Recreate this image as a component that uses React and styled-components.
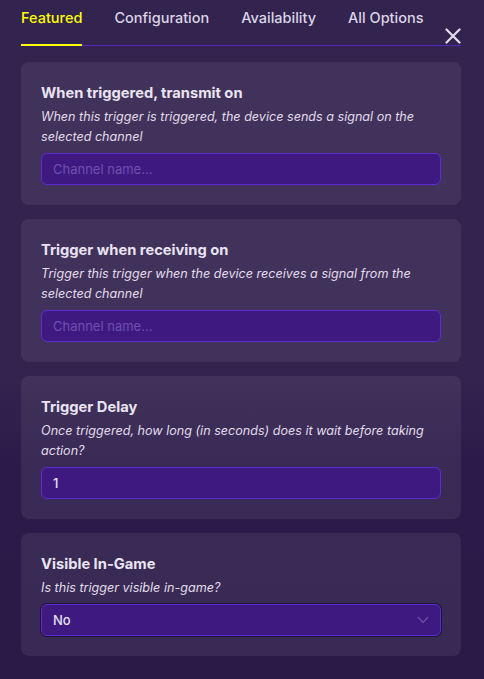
import React from "react";
import styled, { createGlobalStyle } from "styled-components";

const Global = createGlobalStyle`
	html, body {
		margin: 0;
		padding: 0;
	}
	body {
		background: linear-gradient(180deg, #33234f 0px, #33234f 380px, #2b1b4a 460px, #291a48 679px);
		min-height: 679px;
		font-family: Inter, "Noto Sans", sans-serif;
		color: #e9e4f1;
	}
`;

const Page = styled.div`
	width: 484px;
	height: 679px;
	padding: 0 23px 0 21px;
	box-sizing: border-box;
`;

const TabBar = styled.div`
	position: relative;
	display: flex;
	align-items: flex-end;
	height: 45px;
	border-bottom: 1px solid #5527c0;
`;

const Tab = styled.div`
	height: 44px;
	box-sizing: border-box;
	padding-top: 7px;
	margin-right: 32px;
	font-size: 14.5px;
	font-weight: 500;
	color: ${(p) => (p.$active ? "#ffff00" : "#dcd5e6")};
	border-bottom: ${(p) => (p.$active ? "2px solid #ffff00" : "2px solid transparent")};
	margin-bottom: -1px;
	&:last-of-type {
		margin-right: 0;
	}
`;

const Close = styled.button`
	position: absolute;
	right: 0;
	top: 28px;
	width: 16px;
	height: 16px;
	padding: 0;
	border: 0;
	background: none;
	display: flex;
`;

const List = styled.div`
	display: flex;
	flex-direction: column;
	gap: 14px;
	padding-top: 16px;
`;

const Card = styled.div`
	background: rgba(255, 255, 255, 0.07);
	border-radius: 8px;
	padding: 21px 20px 20px 20px;
`;

const Title = styled.div`
	font-size: 14.7px;
	font-weight: 700;
	line-height: 20px;
	color: #e9e4f1;
	margin-bottom: 4px;
`;

const Desc = styled.div`
	font-size: 12.6px;
	font-style: italic;
	line-height: 20px;
	color: #e2dcea;
	margin-bottom: 6px;
`;

const Input = styled.input`
	display: block;
	width: 100%;
	box-sizing: border-box;
	height: 32px;
	border-radius: 6px;
	border: 1px solid #5d2bd3;
	background: #3e1a80;
	color: #e6e0f0;
	font-family: Inter, "Noto Sans", sans-serif;
	font-size: 13px;
	font-weight: 500;
	padding: 0 11px;
	outline: none;
	&::placeholder {
		color: #6f4fae;
		font-weight: 400;
	}
`;

const Select = styled.div`
	display: flex;
	align-items: center;
	justify-content: space-between;
	height: 32px;
	box-sizing: border-box;
	border-radius: 6px;
	border: 1px solid #5d2bd3;
	box-shadow: 0 0 0 1px #1f1533;
	background: #3e1a80;
	padding: 0 11px;
	font-size: 13px;
	font-weight: 500;
	color: #e6e0f0;
`;

const fields = [
	{
		title: "When triggered, transmit on",
		desc: "When this trigger is triggered, the device sends a signal on the selected channel",
		placeholder: "Channel name...",
	},
	{
		title: "Trigger when receiving on",
		desc: "Trigger this trigger when the device receives a signal from the selected channel",
		placeholder: "Channel name...",
	},
	{
		title: "Trigger Delay",
		desc: "Once triggered, how long (in seconds) does it wait before taking action?",
		value: "1",
	},
];

export default function App() {
	return (
		<Page>
			<Global />
			<TabBar>
				<Tab $active>Featured</Tab>
				<Tab>Configuration</Tab>
				<Tab>Availability</Tab>
				<Tab>All Options</Tab>
				<Close aria-label="close">
					<svg width="16" height="16" viewBox="0 0 16 16">
						<path d="M1.5 1.5 L14.5 14.5 M14.5 1.5 L1.5 14.5" stroke="#e4deec" strokeWidth="2.2" strokeLinecap="round" />
					</svg>
				</Close>
			</TabBar>
			<List>
				{fields.map((f) => (
					<Card key={f.title}>
						<Title>{f.title}</Title>
						<Desc>{f.desc}</Desc>
						<Input placeholder={f.placeholder} defaultValue={f.value} />
					</Card>
				))}
				<Card>
					<Title>Visible In-Game</Title>
					<Desc>Is this trigger visible in-game?</Desc>
					<Select>
						<span>No</span>
						<svg width="12" height="8" viewBox="0 0 12 8">
							<path d="M1 1 L6 6.5 L11 1" stroke="#6d52a8" strokeWidth="1.2" fill="none" />
						</svg>
					</Select>
				</Card>
			</List>
		</Page>
	);
}
